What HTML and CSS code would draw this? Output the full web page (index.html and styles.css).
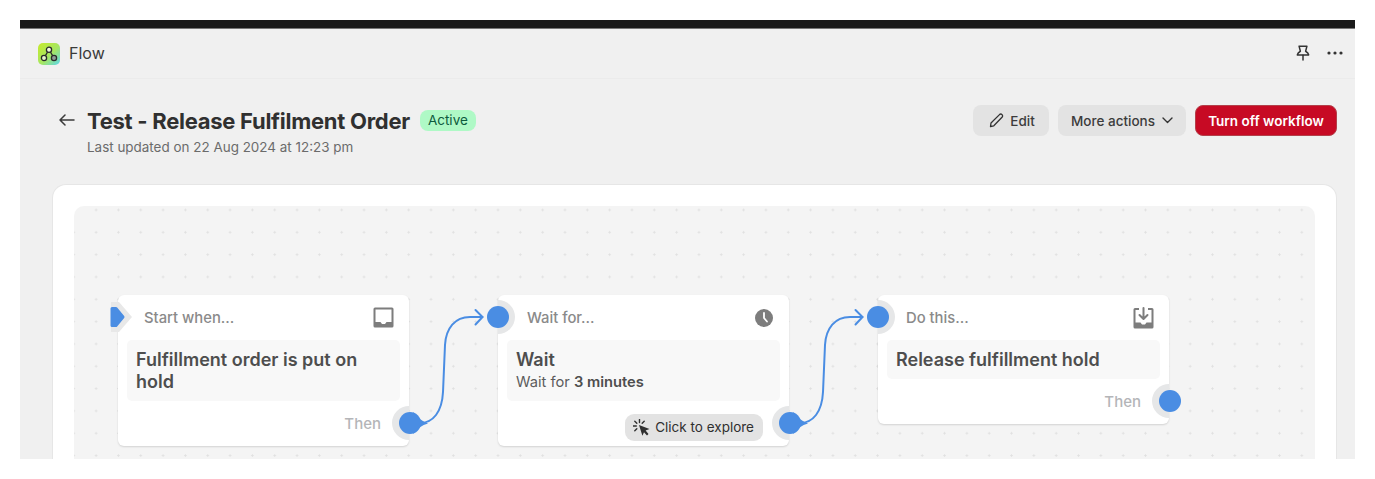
FILE: index.html
```html
<!DOCTYPE html>
<html lang="en">
<head>
  <meta charset="UTF-8">
  <meta name="viewport" content="width=device-width, initial-scale=1.0">
  <title>Flow - Test - Release Fulfilment Order</title>
  <link rel="stylesheet" href="styles.css">
</head>
<body>
  <div class="frame">
    <div class="blackbar"></div>

    <!-- App bar -->
    <div class="topbar">
      <div class="app">
        <svg class="logo" width="22" height="22" viewBox="0 0 22 22">
          <defs>
            <linearGradient id="logo-grad" x1="0" y1="0" x2="1" y2="1">
              <stop offset="0" stop-color="#c6ea2a"/>
              <stop offset="0.55" stop-color="#a5e663"/>
              <stop offset="1" stop-color="#58d6ee"/>
            </linearGradient>
          </defs>
          <rect width="22" height="22" rx="5" fill="url(#logo-grad)"/>
          <path d="M9.6 9 L7.4 12.6 M12.4 9 L14.6 12.6" stroke="#2a2a2a" stroke-width="1.3"/>
          <circle cx="11" cy="6.7" r="2.6" fill="#f0f8dc" stroke="#2a2a2a" stroke-width="1.3"/>
          <circle cx="6" cy="15" r="2.6" fill="#e4f5c8" stroke="#2a2a2a" stroke-width="1.3"/>
          <circle cx="16" cy="15" r="2.6" fill="#8f9f96" stroke="#2a2a2a" stroke-width="1.3"/>
        </svg>
        <span class="app-name">Flow</span>
      </div>
      <div class="top-actions">
        <svg width="14" height="18" viewBox="0 0 16 18" fill="none" stroke="#333" stroke-width="1.7" stroke-linejoin="round" stroke-linecap="round">
          <path d="M3.5 1.2 H12.5 L11 7 C12.8 8 14.2 9.2 14.5 11.2 H1.5 C1.8 9.2 3.2 8 5 7 Z"/>
          <path d="M8 11.5 V17"/>
        </svg>
        <svg width="16" height="4" viewBox="0 0 16 4" fill="#333">
          <circle cx="2" cy="2" r="1.6"/><circle cx="8" cy="2" r="1.6"/><circle cx="14" cy="2" r="1.6"/>
        </svg>
      </div>
    </div>

    <!-- Page header -->
    <div class="page-head">
      <svg class="back" width="16" height="12" viewBox="0 0 16 12" fill="none" stroke="#3a3a3a" stroke-width="1.5" stroke-linecap="round" stroke-linejoin="round">
        <path d="M1 6 H15 M6 1 L1 6 L6 11"/>
      </svg>
      <div class="head-text">
        <div class="title-row">
          <h1>Test - Release Fulfilment Order</h1>
          <span class="badge">Active</span>
        </div>
        <div class="updated">Last updated on 22 Aug 2024 at 12:23 pm</div>
      </div>
      <div class="head-buttons">
        <button class="btn btn-edit">
          <svg width="15" height="15" viewBox="0 0 15 15" fill="none" stroke="#333" stroke-width="1.3" stroke-linejoin="round">
            <path d="M1.5 13.5 L2 10 L10.5 1.6 C11.3 0.9 12.3 0.9 13 1.6 C13.8 2.4 13.8 3.4 13 4.2 L4.8 12.8 Z"/>
          </svg>
          Edit
        </button>
        <button class="btn btn-more">
          More actions
          <svg width="11" height="7" viewBox="0 0 11 7" fill="none" stroke="#333" stroke-width="1.4" stroke-linecap="round" stroke-linejoin="round">
            <path d="M1 1 L5.5 5.5 L10 1"/>
          </svg>
        </button>
        <button class="btn btn-danger">Turn off workflow</button>
      </div>
    </div>

    <!-- Workflow card -->
    <div class="card">
      <div class="canvas">
        <div class="node node-start">
          <div class="node-head">
            <span class="node-label">Start when...</span>
            <svg width="21" height="21" viewBox="0 0 21 21">
              <path fill="#7d7d7d" fill-rule="evenodd" d="M2 0.5 H19 A1.5 1.5 0 0 1 20.5 2 V19 A1.5 1.5 0 0 1 19 20.5 H2 A1.5 1.5 0 0 1 0.5 19 V2 A1.5 1.5 0 0 1 2 0.5 Z M2.5 2.5 V15 H7.5 L9 17 H12 L13.5 15 H18.5 V2.5 Z"/>
            </svg>
          </div>
          <div class="node-body">
            <div class="node-title">Fulfillment order is put on hold</div>
          </div>
          <div class="node-foot"><span class="then">Then</span></div>
          <svg class="start-flag" width="24" height="30" viewBox="0 0 24 30">
            <path fill="#e8e8e8" d="M2 0 H10 L23 15 L10 30 H2 Z"/>
            <path fill="#4a8de3" stroke="#4a8de3" stroke-width="3" stroke-linejoin="round" d="M3 6.5 H7 L14 15 L7 23.5 H3 Z"/>
          </svg>
          <div class="port port-out"></div>
        </div>

        <div class="node node-wait">
          <div class="node-head">
            <span class="node-label">Wait for...</span>
            <svg width="18" height="18" viewBox="0 0 18 18">
              <circle cx="9" cy="9" r="9" fill="#7d7d7d"/>
              <path d="M9 4 V9 L12 12.5" fill="none" stroke="#fff" stroke-width="1.8" stroke-linecap="round" stroke-linejoin="round"/>
            </svg>
          </div>
          <div class="node-body">
            <div class="node-title">Wait</div>
            <div class="node-desc">Wait for <b>3 minutes</b></div>
          </div>
          <div class="node-foot">
            <span class="explore">
              <svg width="17" height="17" viewBox="0 0 17 17">
                <path d="M6 6 L16.5 10 L12.6 11.6 L15.5 15 L14 16.5 L11 13.2 L9.4 16.8 Z" fill="#303030"/>
                <path d="M6.5 0.5 V3.5 M1.8 2.2 L3.8 4.2 M0.3 7 H3.3 M1.8 11.8 L3.8 9.8 M11.2 2.2 L9.2 4.2" stroke="#303030" stroke-width="1.4" stroke-linecap="round" fill="none"/>
              </svg>
              Click to explore
            </span>
          </div>
          <div class="port port-in"></div>
          <div class="port port-out"></div>
        </div>

        <div class="node node-do">
          <div class="node-head">
            <span class="node-label">Do this...</span>
            <svg width="21" height="22" viewBox="0 0 21 22">
              <path fill="#7d7d7d" d="M2 1 H6 V3 H2.5 V15.5 H7.5 L9 17.5 H12 L13.5 15.5 H18.5 V3 H15 V1 H19 A1.5 1.5 0 0 1 20.5 2.5 V20 A1.5 1.5 0 0 1 19 21.5 H2 A1.5 1.5 0 0 1 0.5 20 V2.5 A1.5 1.5 0 0 1 2 1 Z"/>
              <path d="M10.5 1 V11.5 M6.5 8 L10.5 12 L14.5 8" fill="none" stroke="#7d7d7d" stroke-width="2" stroke-linecap="round" stroke-linejoin="round"/>
            </svg>
          </div>
          <div class="node-body">
            <div class="node-title">Release fulfillment hold</div>
          </div>
          <div class="node-foot"><span class="then">Then</span></div>
          <div class="port port-in"></div>
          <div class="port port-out"></div>
        </div>

        <!-- Connectors, drawn in page coordinates -->
        <svg class="wires" width="1241" height="300" viewBox="74 206 1241 300" fill="none" stroke="#4a8de3" stroke-width="2" stroke-linecap="round" stroke-linejoin="round">
          <path d="M420 423 C433 423 442 412 443 392 L445 345 C446 328 455 317 470 317 H482.5"/>
          <path d="M475.5 310 L482.5 317 L475.5 324.5"/>
          <path d="M413 412 Q419 420 428 423.5 Q419 426 413 434 Z" fill="#4a8de3" stroke="none"/>
          <path d="M800 423 C813 423 822 412 823 392 L825 345 C826 328 835 317 850 317 H862.5"/>
          <path d="M855.5 310 L862.5 317 L855.5 324.5"/>
          <path d="M793 412 Q799 420 808 423.5 Q799 426 793 434 Z" fill="#4a8de3" stroke="none"/>
        </svg>
      </div>
    </div>
  </div>
</body>
</html>
```

FILE: styles.css
```css
* {
  box-sizing: border-box;
}
body {
  margin: 0;
  background-color: #fff;
  color: #303030;
  font-family: Inter, 'Noto Sans', sans-serif;
}
.frame {
  height: 439px;
  margin: 20px 20px 0;
  background-color: #f0f0f0;
  overflow: hidden;
}
.blackbar {
  height: 9px;
  background-color: #1a1a1a;
  border-bottom: 1px solid #777;
}
.topbar {
  display: flex;
  align-items: center;
  justify-content: space-between;
  height: 50px;
  padding: 0 12px 0 18px;
  border-bottom: 1px solid #ebebeb;
}
.app {
  display: flex;
  align-items: center;
  gap: 9px;
}
.app-name {
  margin-top: -1px;
  font-size: 16px;
  color: #3a3a3a;
}
.top-actions {
  display: flex;
  align-items: center;
  gap: 17px;
  margin-top: -1px;
}

/* Page header */
.page-head {
  display: flex;
  align-items: flex-start;
  height: 105px;
  padding: 26px 18px 0 39px;
}
.back {
  flex: none;
  margin: 9px 12px 0 0;
}
.head-text {
  flex: 1;
}
.title-row {
  display: flex;
  align-items: center;
  gap: 10px;
  height: 31px;
}
h1 {
  margin: 0;
  font-size: 22px;
  font-weight: 700;
  letter-spacing: -0.27px;
  color: #303030;
}
.badge {
  padding: 2px 8px;
  border-radius: 8px;
  background-color: #aff9c6;
  color: #0d5b3d;
  font-size: 13.5px;
  line-height: 17px;
}
.updated {
  margin-top: 2px;
  font-size: 13.45px;
  line-height: 18px;
  color: #6b6b6b;
}
.head-buttons {
  display: flex;
  gap: 9px;
}
.btn {
  display: flex;
  align-items: center;
  justify-content: center;
  height: 31px;
  border: none;
  border-radius: 8px;
  background-color: #e3e3e3;
  color: #3c3c3c;
  font-family: inherit;
  font-size: 13.5px;
  font-weight: 500;
}
.btn-edit {
  gap: 6px;
  width: 76px;
  padding-left: 8px;
}
.btn-more {
  gap: 7px;
  width: 128px;
}
.btn-danger {
  width: 142px;
  background-color: #c70a24;
  border: 1px solid #b3404a;
  color: #fff;
  font-weight: 600;
}

/* Workflow card */
.card {
  margin: 0 18px 0 32px;
  padding: 22px;
  height: 320px;
  background-color: #fff;
  border: 1px solid #e6e6e6;
  border-width: 1px 1px 0;
  border-radius: 14px;
}
.canvas {
  position: relative;
  height: 298px;
  margin: -1px -1px 0;
  border-radius: 10px;
  background-color: #f4f4f4;
  background-image: radial-gradient(circle, #e0e0e0 0.9px, transparent 1.3px);
  background-size: 22.33px 22.33px;
  background-position: -11.4px -7.2px;
}
.node {
  position: absolute;
  top: 89px;
  width: 291px;
  border-radius: 6px;
  background-color: #fff;
  box-shadow: 0 1px 2px rgba(0, 0, 0, 0.14);
}
.node-start {
  left: 44px;
}
.node-wait {
  left: 424px;
}
.node-do {
  left: 804px;
}
.node-head {
  display: flex;
  align-items: center;
  justify-content: space-between;
  height: 45px;
  padding: 0 15px 0 26px;
  border-radius: 6px 6px 0 0;
}
.node-wait .node-head {
  padding: 0 16px 0 29px;
}
.node-do .node-head {
  padding: 0 15px 0 28px;
}
.node-label {
  font-size: 14.8px;
  font-weight: 500;
  color: #8a8a8a;
}
.node-body {
  margin: 0 9px;
  padding: 9px 9px 8px;
  border-radius: 5px;
  background-color: #f8f8f8;
  line-height: 22px;
}
.node-title {
  font-size: 18px;
  font-weight: 600;
  color: #4e4e4e;
}
.node-desc {
  font-size: 14.7px;
  color: #5c5c5c;
}
.node-desc b {
  font-weight: 600;
  color: #4e4e4e;
}
.node-foot {
  display: flex;
  align-items: center;
  justify-content: flex-end;
  height: 45px;
  padding-right: 28px;
}
.then {
  font-size: 15px;
  font-weight: 500;
  color: #b4b5b8;
}
.explore {
  display: flex;
  align-items: center;
  gap: 5px;
  height: 27px;
  margin: 7px -2px 0 0;
  padding: 0 9px 0 8px;
  border-radius: 9px;
  background-color: #e3e3e3;
  color: #303030;
  font-size: 13.5px;
}

/* Ports sit on the node edges, half ring inside the node */
.port {
  position: absolute;
  width: 17px;
  height: 34px;
  background-color: #e6e7e8;
}
.port::after {
  content: "";
  position: absolute;
  top: 6px;
  width: 22px;
  height: 22px;
  border-radius: 50%;
  background-color: #4a8de3;
}
.port-in {
  left: 0;
  top: 5px;
  border-radius: 0 17px 17px 0;
}
.port-in::after {
  left: -11px;
}
.port-out {
  right: 0;
  bottom: 6px;
  border-radius: 17px 0 0 17px;
}
.port-out::after {
  left: 7px;
}
.start-flag {
  position: absolute;
  left: -9px;
  top: 7px;
}
.wires {
  position: absolute;
  left: 0;
  top: 0;
  pointer-events: none;
}
```
